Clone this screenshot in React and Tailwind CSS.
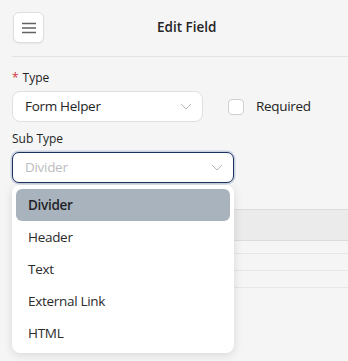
import React from "react";

const OPTIONS = ["Divider", "Header", "Text", "External Link", "HTML"];

function Chevron() {
  return (
    <svg width="12" height="7" viewBox="0 0 12 7" fill="none" className="shrink-0">
      <path d="M1 1l5 5 5-5" stroke="#b5b5b5" strokeWidth="1" />
    </svg>
  );
}

export default function App() {
  return (
    <div
      className="relative w-[348px] h-[361px] overflow-hidden bg-[#f5f5f5] text-[#242424]"
      style={{ fontFamily: '"Open Sans", "Noto Sans", sans-serif' }}
    >
      {/* header */}
      <div className="ml-3 h-[57px] flex items-center border-b border-[#e3e3e3]">
        <button className="w-[31px] h-[31px] mt-[-1px] ml-px flex items-center justify-center bg-white border border-[#dedede] rounded-md shadow-[0_1px_2px_rgba(0,0,0,0.06)]">
          <svg width="14" height="12" viewBox="0 0 14 12">
            <path d="M0 1.5h14M0 6h14M0 10.5h14" stroke="#616161" strokeWidth="1.6" />
          </svg>
        </button>
        <div className="flex-1 pl-[113px] text-[13.5px] font-semibold leading-none">Edit Field</div>
      </div>

      {/* form */}
      <div className="px-3 pt-[13px]">
        <div className="text-[12px] leading-[16px] flex items-center gap-1">
          <span className="text-[#d13438]">*</span>
          <span>Type</span>
        </div>
        <div className="mt-[5px] flex items-center">
          <div className="w-[191px] h-[31px] bg-white border border-[#e0e0e0] rounded-lg flex items-center justify-between pl-3 pr-[10px]">
            <span className="text-[13.5px] tracking-[-0.3px]">Form Helper</span>
            <Chevron />
          </div>
          <div className="ml-[25px] w-4 h-4 bg-white border border-[#cfcfcf] rounded" />
          <span className="ml-3 text-[13.5px] tracking-[-0.3px]">Required</span>
        </div>

        <div className="mt-[9px] text-[12px] leading-[16px]">Sub Type</div>
        <div className="mt-[5px] w-[222px] h-[31px] bg-white border-[1.5px] border-[#1c3361] rounded-[7px] shadow-[0_0_0_1.5px_rgba(120,140,180,0.35)] flex items-center justify-between pl-3 pr-[10px]">
          <span className="text-[13.5px] text-[#bdbdbd] tracking-[-0.3px]">Divider</span>
          <Chevron />
        </div>
      </div>

      {/* table behind dropdown */}
      <div className="mt-[26px] ml-3">
        <div className="h-[32px] bg-[#ebebeb] border-t border-b border-[#dcdcdc]" />
        <div className="h-[13px] border-b border-[#e6e6e6]" />
        <div className="h-[17px] border-b border-[#e6e6e6]" />
        <div className="h-[17px] border-b border-[#e6e6e6]" />
      </div>

      {/* dropdown */}
      <div className="absolute left-3 top-[185px] w-[222px] bg-white rounded-lg p-1 shadow-[0_2px_10px_rgba(0,0,0,0.12)]">
        {OPTIONS.map((o, i) => (
          <div
            key={o}
            className={`h-8 flex items-center px-3 text-[13.5px] tracking-[-0.3px] rounded-md ${
              i === 0 ? "bg-[#a9b3bd] font-semibold text-[#1f2328]" : "text-[#2b2b2b]"
            }`}
          >
            {o}
          </div>
        ))}
      </div>
    </div>
  );
}
